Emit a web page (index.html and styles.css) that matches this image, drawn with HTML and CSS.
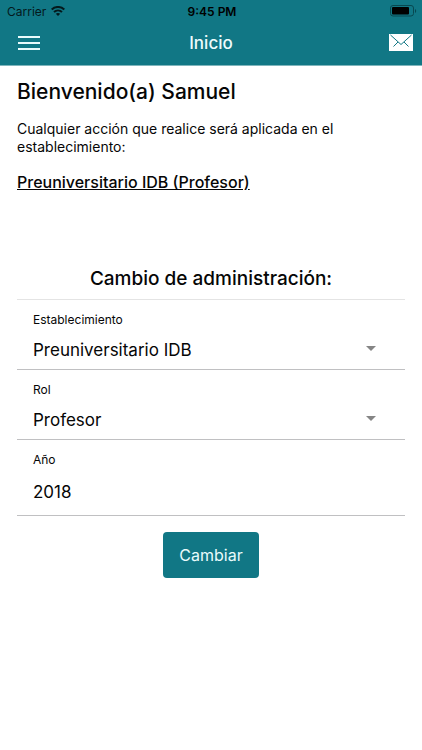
FILE: index.html
```html
<!DOCTYPE html>
<html lang="es">
<head>
  <meta charset="utf-8">
  <meta name="viewport" content="width=device-width, initial-scale=1">
  <title>Inicio</title>
  <link rel="stylesheet" href="styles.css">
</head>
<body>
  <header class="header">
    <div class="status">
      <div class="carrier">
        <span>Carrier</span>
        <svg class="wifi" viewBox="0 0 14 10" aria-hidden="true">
          <path d="M.7 3.500C4.300.1 9.700.1 13.300 3.500M3 6c2.300-2.100 5.700-2.100 8 0" fill="none" stroke="currentColor" stroke-width="2"/>
          <path d="M7 10 4.800 7.800c1.300-1.100 3.100-1.100 4.400 0z" fill="currentColor"/>
        </svg>
      </div>
      <span class="time">9:45 PM</span>
      <svg class="battery" viewBox="0 0 27 12" aria-hidden="true">
        <rect x="0.500" y="0.500" width="23" height="10.500" rx="2.500" fill="none" stroke="#084850"/>
        <rect x="2" y="2" width="17" height="7.500" rx="1" fill="#000"/>
        <path d="M25 4c1.600.6 1.600 3.400 0 4z" fill="#084850"/>
      </svg>
    </div>
    <div class="toolbar">
      <button class="icon-button menu" type="button" aria-label="Menú">
        <svg class="menu-icon" viewBox="0 0 22 14" aria-hidden="true">
          <path d="M0 1h22M0 7h22M0 13h22" stroke="#e9fbfc" stroke-width="2"/>
        </svg>
      </button>
      <span class="title">Inicio</span>
      <button class="icon-button mail" type="button" aria-label="Mensajes">
        <svg class="mail-icon" viewBox="0 0 24 17" aria-hidden="true">
          <rect width="24" height="17" fill="#fff"/>
          <path d="M1.500 1 12 10.500 22.500 1M4.500 12.500 9 8M19.500 12.500 15 8" fill="none" stroke="#117785" stroke-width="1"/>
        </svg>
      </button>
    </div>
  </header>
  <main class="content">
    <h1 class="welcome">Bienvenido(a) Samuel</h1>
    <p class="notice">Cualquier acción que realice será aplicada en el establecimiento:</p>
    <p class="current">Preuniversitario IDB (Profesor)</p>
    <form class="form">
      <h2 class="form-title">Cambio de administración:</h2>
      <div class="field">
        <label for="place">Establecimiento</label>
        <div class="picker">
          <select id="place"><option>Preuniversitario IDB</option></select>
          <svg class="caret" viewBox="0 0 10 5" aria-hidden="true"><path d="M0 0h10L5 5z" fill="#858585"/></svg>
        </div>
      </div>
      <div class="field">
        <label for="role">Rol</label>
        <div class="picker">
          <select id="role"><option>Profesor</option></select>
          <svg class="caret" viewBox="0 0 10 5" aria-hidden="true"><path d="M0 0h10L5 5z" fill="#858585"/></svg>
        </div>
      </div>
      <div class="field">
        <label for="year">Año</label>
        <input id="year" type="text" value="2018">
      </div>
      <button class="submit" type="button">Cambiar</button>
    </form>
  </main>
</body>
</html>
```
FILE: styles.css
```css
* { box-sizing: border-box; }

body {
  margin: 0;
  background: #fff;
  color: #060606;
  font-family: Inter, "Liberation Sans", sans-serif;
}

button, input, select {
  margin: 0;
  padding: 0;
  border: 0;
  background: none;
  color: inherit;
  font: inherit;
}

svg { display: block; }

.header {
  background: #117785;
  border-bottom: 1px solid #7fb5bc;
}

.status {
  display: grid;
  grid-template-columns: 1fr auto 1fr;
  align-items: center;
  height: 22px;
  padding: 0 5px 0 7px;
  color: #04191c;
  font-size: 12px;
}

.carrier {
  display: flex;
  align-items: center;
  gap: 5px;
}

.wifi { width: 14px; height: 10px; }

.time {
  color: #000;
  font-weight: 600;
}

.battery {
  width: 27px;
  height: 12px;
  justify-self: end;
}

.toolbar {
  display: grid;
  grid-template-columns: 1fr auto 1fr;
  align-items: center;
  height: 43px;
  padding-bottom: 2px;
}

.menu {
  justify-self: start;
  margin-left: 18px;
}

.mail {
  justify-self: end;
  margin-right: 9px;
}

.menu-icon { width: 22px; height: 14px; }
.mail-icon { width: 24px; height: 17px; }

.title {
  color: #eefcfd;
  font-size: 17px;
  font-weight: 500;
}

.content { padding: 12px 17px; }

h1, h2, p { margin: 0; }

.welcome {
  font-size: 21px;
  font-weight: 500;
  line-height: 28px;
}

.notice {
  margin-top: 14px;
  font-size: 14px;
  line-height: 18px;
}

.current {
  margin-top: 16px;
  font-size: 16px;
  font-weight: 500;
  line-height: 20px;
  text-decoration: underline;
}

.form {
  display: flex;
  flex-direction: column;
  margin-top: 73px;
}

.form-title {
  padding-bottom: 6px;
  border-bottom: 1px solid #e4e4e4;
  font-size: 19px;
  font-weight: 500;
  line-height: 28px;
  text-align: center;
}

.field {
  display: flex;
  flex-direction: column;
  padding: 12px 16px 7px;
  border-bottom: 1px solid #c0c0c2;
}

.field label {
  font-size: 12px;
  line-height: 16px;
}

.picker {
  display: flex;
  align-items: center;
  margin-top: 10px;
}

.picker select {
  flex: 1;
  height: 24px;
  appearance: none;
  font-size: 17px;
}

.caret {
  width: 10px;
  height: 5px;
  margin: 0 13px 4px 0;
}

.field input {
  height: 24px;
  margin: 12px 0 4px;
  font-size: 17px;
}

.submit {
  align-self: center;
  height: 46px;
  margin-top: 16px;
  padding: 0 16px;
  border-radius: 4px;
  background: #117785;
  color: #e9fbfc;
  font-size: 16px;
}
```
